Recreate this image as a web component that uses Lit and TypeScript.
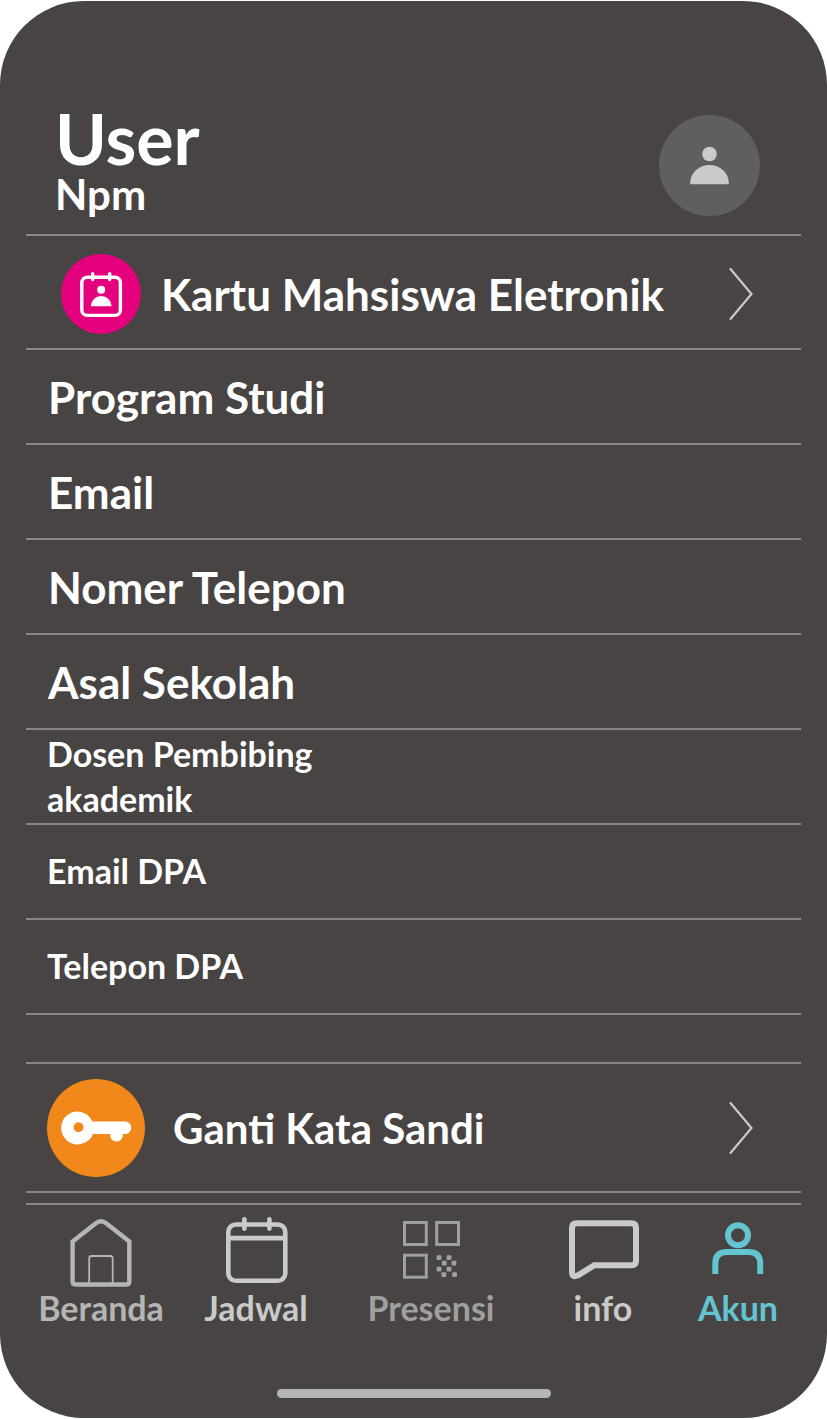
import { LitElement, html, svg, css } from "lit";
import { customElement, property } from "lit/decorators.js";

const chevron = html`<svg class="chevron" viewBox="0 0 26 56" aria-hidden="true">
  <path d="M2.5 3 L23.5 28 L2.5 53" fill="none" stroke="#c9cac9" stroke-width="2.2" stroke-linecap="round" stroke-linejoin="miter" />
</svg>`;

const cardIcon = html`<svg class="badge small" viewBox="0 0 80 80" aria-hidden="true">
  <circle cx="40" cy="40" r="40" fill="#e5007e" />
  <g fill="none" stroke="#fff" stroke-width="3.4">
    <rect x="20.8" y="23.2" width="38.6" height="38.2" rx="5.5" />
    <path d="M31.7 19.7 V25.5 M48.7 19.7 V25.5" stroke-linecap="round" />
  </g>
  <circle cx="40.2" cy="35.8" r="4" fill="#fff" />
  <path d="M29.8 52.3 a10.4 10.4 0 0 1 20.8 0z" fill="#fff" />
</svg>`;

const keyIcon = html`<svg class="badge" viewBox="0 0 98 98" aria-hidden="true">
  <circle cx="49" cy="49" r="49" fill="#f18819" />
  <path
    fill="#fff"
    fill-rule="evenodd"
    d="M30.5 32.4 A16.5 16.5 0 0 1 45.5 42.4 H78 A6.2 6.2 0 0 1 78 55 H75.8 A6.4 6.4 0 1 1 63.2 55 H46 A16.5 16.5 0 1 1 30.5 32.4z M31.5 43.3 a4.9 4.9 0 1 0 0.01 0z"
  />
</svg>`;

const avatarIcon = html`<svg class="avatar" viewBox="0 0 101 101" role="img" aria-label="Foto profil">
  <circle cx="50.5" cy="50.5" r="50.5" fill="#605e5f" />
  <circle cx="50.5" cy="39" r="7.3" fill="#c9cac9" />
  <path d="M31.2 69.3 V68 a19.3 18 0 0 1 38.6 0 V69.3z" fill="#c9cac9" />
</svg>`;

const homeIcon = svg`
  <path d="M7.6 25.5 L30.5 7.5 Q36 3 41.5 7.5 L64.3 25.5" stroke-width="4.4" />
  <path d="M7.6 24 V65.5 Q7.6 68.5 10.6 68.5 H61.3 Q64.3 68.5 64.3 65.5 V24" stroke-width="4.4" />
  <path d="M24.2 68 V42.5 Q24.2 40 26.7 40 H45.2 Q47.7 40 47.7 42.5 V68" stroke-width="1.8" />`;

const calendarIcon = svg`
  <g stroke-width="4.6">
    <rect x="8.3" y="8.5" width="57" height="56.2" rx="7.5" />
    <path d="M8.3 22.1 H65.3" />
    <path d="M24.4 3.2 V12.6 M49.4 3.2 V12.6" stroke-linecap="round" />
  </g>`;

const dots = [
  [44, 41.7], [54, 41.7], [49.3, 47.2], [59, 47.2],
  [44, 53.1], [54, 53.1], [48.8, 58.7], [59.6, 58.7],
];

const codeIcon = svg`
  <g stroke-width="3">
    <rect x="9.5" y="6.5" width="21.8" height="22" />
    <rect x="41.7" y="6.5" width="21.8" height="22" />
    <rect x="9.5" y="39.2" width="21.8" height="22" />
  </g>
  ${dots.map(([x, y]) => svg`<rect x=${x - 2.4} y=${y - 2.4} width="4.8" height="4.8" rx="1" fill="currentColor" stroke="none" />`)}`;

const chatIcon = svg`
  <path stroke-width="6" d="M9.5 7.3 H64.5 Q69 7.3 69 11.8 V45 Q69 49.2 64.5 49.2 H27.3 L11 59.3 Q5 62 5 56 V11.8 Q5 7.3 9.5 7.3z" />`;

const personIcon = svg`
  <circle cx="36" cy="19.3" r="10" stroke-width="6" />
  <path d="M13.3 58 V47.5 Q13.3 36 24.8 36 H46.7 Q58.2 36 58.2 47.5 V58" stroke-width="6" />`;

@customElement("menu-row")
class MenuRow extends LitElement {
  @property() label = "";
  @property({ attribute: false }) icon: unknown = null;
  @property({ type: Boolean, reflect: true }) tall = false;

  static styles = css`
    :host {
      display: block;
      border-bottom: 2px solid #898786;
    }
    a {
      display: flex;
      align-items: center;
      gap: 20px;
      box-sizing: border-box;
      min-height: 112px;
      padding: 4px 47px 0 35px;
      color: #fff;
      text-decoration: none;
      font-size: 44px;
      line-height: 48px;
    }
    :host([tall]) a {
      gap: 28px;
      min-height: 127px;
      padding: 0 47px 0 21px;
      font-size: 42px;
    }
    .text {
      flex: 1;
    }
    .badge {
      width: 98px;
      height: 98px;
      flex: none;
    }
    .small {
      width: 80px;
      height: 80px;
    }
    .chevron {
      width: 26px;
      height: 56px;
      flex: none;
    }
  `;

  render() {
    return html`<a href="#">${this.icon}<span class="text">${this.label}</span>${chevron}</a>`;
  }
}

@customElement("app-root")
class AppRoot extends LitElement {
  private fields = ["Program Studi", "Email", "Nomer Telepon", "Asal Sekolah"];
  private advisor = ["Dosen Pembibing akademik", "Email DPA", "Telepon DPA"];
  private tabs = [
    { label: "Beranda", icon: homeIcon, tone: "mid" },
    { label: "Jadwal", icon: calendarIcon, tone: "light" },
    { label: "Presensi", icon: codeIcon, tone: "dim" },
    { label: "info", icon: chatIcon, tone: "light" },
    { label: "Akun", icon: personIcon, tone: "active" },
  ];

  static styles = css`
    :host {
      display: block;
      box-sizing: border-box;
      min-height: 100vh;
      padding: 1px 0;
      background: #fff;
      color: #fff;
      font-family: Lato, "Liberation Sans", sans-serif;
      font-weight: 700;
    }
    .screen {
      display: flex;
      flex-direction: column;
      box-sizing: border-box;
      min-height: calc(100vh - 2px);
      padding: 0 26px 20px;
      border-radius: 84px;
      background: #484443;
    }
    header {
      display: flex;
      align-items: flex-end;
      justify-content: space-between;
      padding: 102px 41px 18px 29px;
      border-bottom: 2px solid #898786;
    }
    h1,
    p {
      margin: 0;
      font-weight: 700;
    }
    h1 {
      font-size: 70px;
      line-height: 70px;
    }
    p {
      font-size: 42px;
      line-height: 43px;
    }
    .avatar {
      width: 101px;
      height: 101px;
    }
    ul {
      margin: 0;
      padding: 0;
      list-style: none;
    }
    .field {
      display: flex;
      align-items: center;
      box-sizing: border-box;
      min-height: 95px;
      padding-left: 22px;
      border-bottom: 2px solid #898786;
      font-size: 44px;
      line-height: 48px;
    }
    .minor {
      padding: 0 0 2px 21px;
      font-size: 34px;
      line-height: 45px;
    }
    .minor span {
      max-width: 320px;
    }
    .spacer {
      height: 47px;
      border-bottom: 2px solid #898786;
    }
    nav {
      display: grid;
      grid-template-columns: 150fr 160fr 190fr 154fr 116fr;
      margin-top: 10px;
      padding: 11px 5px 0 0;
      border-top: 2px solid #898786;
    }
    .tab {
      display: flex;
      flex-direction: column;
      align-items: center;
      text-decoration: none;
      font-size: 34px;
      line-height: 40px;
    }
    .tab svg {
      width: 72px;
      height: 72px;
      fill: none;
      stroke: currentColor;
    }
    .mid {
      color: #b5b5b5;
    }
    .light {
      color: #c9cac9;
    }
    .dim {
      color: #9f9f9f;
    }
    .active {
      color: #63c4d2;
    }
    .handle {
      width: 274px;
      height: 9px;
      margin: auto auto 0;
      border-radius: 5px;
      background: #b5b5b5;
    }
  `;

  render() {
    return html`
      <div class="screen">
        <header>
          <div>
            <h1>User</h1>
            <p>Npm</p>
          </div>
          ${avatarIcon}
        </header>
        <main>
          <menu-row label="Kartu Mahsiswa Eletronik" .icon=${cardIcon}></menu-row>
          <ul>
            ${this.fields.map((f) => html`<li class="field">${f}</li>`)}
            ${this.advisor.map((f) => html`<li class="field minor"><span>${f}</span></li>`)}
          </ul>
          <div class="spacer"></div>
          <menu-row tall label="Ganti Kata Sandi" .icon=${keyIcon}></menu-row>
        </main>
        <nav>
          ${this.tabs.map(
            (t) => html`<a class="tab ${t.tone}" href="#">
              <svg viewBox="0 0 72 72" aria-hidden="true">${t.icon}</svg>
              <span>${t.label}</span>
            </a>`
          )}
        </nav>
        <div class="handle"></div>
      </div>
    `;
  }
}
